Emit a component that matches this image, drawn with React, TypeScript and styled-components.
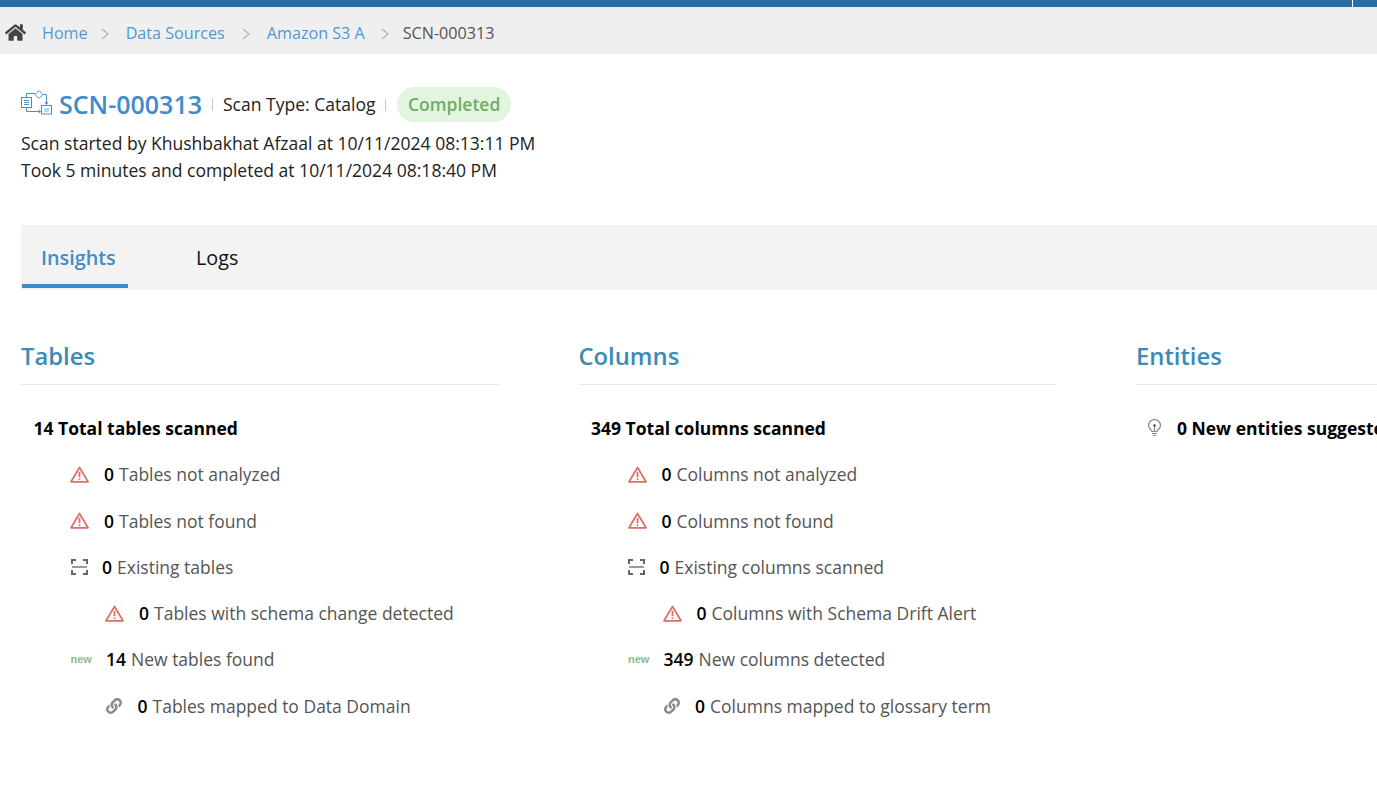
import React from 'react'
import styled, { createGlobalStyle } from 'styled-components'
import { FaHome, FaLink } from 'react-icons/fa'

const GlobalStyle = createGlobalStyle`
    html, body {
        margin: 0;
        padding: 0;
        background: #fff;
        overflow: hidden;
    }
    body {
        font-family: 'Open Sans', 'Liberation Sans', sans-serif;
        color: #333;
    }
`

const Page = styled.div`
    width: 1377px;
    height: 802px;
    overflow: hidden;
`

const TopBar = styled.div`
    height: 7px;
    background: #2d6ca2;
    display: flex;
    justify-content: flex-end;
`

const TopBarEnd = styled.div`
    width: 24px;
    border-left: 1px solid #fff;
`

const Breadcrumb = styled.nav`
    height: 47px;
    box-sizing: border-box;
    padding: 4px 0 0 5px;
    background: #efefef;
    display: flex;
    align-items: center;
    font-size: 16.15px;
    color: #555;
`

const HomeIcon = styled(FaHome)`
    width: 21px;
    height: 21px;
    color: #444;
    margin-right: 16px;
`

const CrumbLink = styled.a`
    color: #4f9ad4;
    text-decoration: none;
`

const CrumbSep = styled.svg<{ $left: number; $right: number }>`
    width: 8px;
    height: 12px;
    margin: 2px ${props => props.$right}px 0 ${props => props.$left}px;
    fill: none;
    stroke: #b5b5b5;
    stroke-width: 1.3;
`

const Header = styled.header`
    padding: 32px 0 0 21px;
    height: 171px;
    box-sizing: border-box;
`

const TitleRow = styled.div`
    display: flex;
    align-items: center;
    height: 36px;
    margin-bottom: 8px;
`

const ScanIcon = styled.svg`
    width: 31px;
    height: 26px;
    margin-right: 7px;
    margin-top: -4px;
    fill: none;
    stroke: #4a90c9;
    stroke-width: 1;
`

const ScanId = styled.h1`
    margin: 0;
    font-size: 25px;
    font-weight: 600;
    color: #428bca;
`

const Divider = styled.span`
    width: 1px;
    height: 12px;
    margin: 2px 10px 0 10px;
    background: #c8c8c8;
`

const ScanType = styled.span`
    font-size: 17.55px;
    color: #222;
`

const StatusPill = styled.span`
    background: #e2f5de;
    color: #74aa68;
    font-size: 17.55px;
    font-weight: 600;
    border-radius: 18px;
    padding: 5px 10.5px;
    margin-left: 1px;
    line-height: 25px;
`

const Meta = styled.p`
    margin: 0;
    font-size: 17.55px;
    line-height: 27px;
    color: #222;
`

const Tabs = styled.div`
    margin-left: 21px;
    height: 65px;
    background: #f3f3f3;
    display: flex;
    align-items: flex-start;
`

const Tab = styled.div<{ $active?: boolean }>`
    width: 106px;
    height: 63px;
    margin-left: ${props => props.$active ? '1px' : '0'};
    padding-left: ${props => props.$active ? '19px' : '68px'};
    padding-top: 6px;
    display: flex;
    align-items: center;
    font-size: 19.8px;
    font-weight: ${props => props.$active ? 600 : 400};
    color: ${props => props.$active ? '#428bca' : '#111'};
    border-bottom: ${props => props.$active ? '4px solid #428bca' : '4px solid transparent'};
    box-sizing: border-box;
`

const Columns = styled.div`
    display: flex;
    gap: 80px;
    padding: 49px 0 0 21px;
`

const Column = styled.section`
    flex: 0 0 477.5px;
`

const ColumnTitle = styled.h2`
    margin: 0;
    height: 45px;
    border-bottom: 1px solid #e9e9e9;
    font-size: 23.8px;
    line-height: 34px;
    font-weight: 600;
    color: #3a8bb5;
`

const Total = styled.div<{ $pad?: number }>`
    display: flex;
    align-items: center;
    margin-top: 30px;
    padding-left: ${props => props.$pad ?? 12.5}px;
    height: 26px;
    font-size: 17.5px;
    font-weight: 700;
    color: #000;
`

const Row = styled.div<{ $indent: number }>`
    display: flex;
    align-items: center;
    height: 46.25px;
    padding-left: ${props => props.$indent}px;
    font-size: 17.5px;
    color: #555;
    white-space: nowrap;
`

const RowList = styled.div`
    margin-top: 10.3px;
`

const IconSlot = styled.span<{ $w: number }>`
    width: ${props => props.$w}px;
    display: flex;
    align-items: center;
    flex: none;
`

const Count = styled.b`
    color: #000;
    font-weight: 600;
    margin-right: 5px;
`

const NewTag = styled.span`
    font-family: 'Liberation Sans', Arial, sans-serif;
    font-size: 11px;
    font-weight: 700;
    color: #8dbb84;
`

const LinkIcon = styled(FaLink)`
    width: 16px;
    height: 16px;
    color: #8c8c8c;
`

const BulbSvg = styled.svg`
    width: 15px;
    height: 18px;
    fill: none;
    stroke: #888;
    stroke-width: 1.2;
`

const WarnSvg = styled.svg`
    width: 19px;
    height: 17px;
    fill: none;
    stroke: #dc6f62;
`

const BracketSvg = styled.svg`
    width: 17px;
    height: 16px;
    fill: none;
    stroke: #666;
    stroke-width: 2;
`

const Warn = () => (
    <WarnSvg viewBox="0 0 19 17">
        <path d="M9.5 1.5 L18 15.8 H1 Z" strokeWidth="1.7" strokeLinejoin="round" />
        <path d="M9.5 5.8 V11.2 M9.5 12.4 V14" strokeWidth="1.8" />
    </WarnSvg>
)

const Bracket = () => (
    <BracketSvg viewBox="0 0 17 16">
        <path d="M1 5 V1 H5 M12 1 H16 V5 M1 11 V15 H5 M12 15 H16 V11" />
        <path d="M1 8 H16" strokeWidth="1.3" />
    </BracketSvg>
)

const Bulb = () => (
    <BulbSvg viewBox="0 0 15 18">
        <path d="M5 12.5 C4.8 10.5 1.5 9.6 1.5 6.5 A6 6 0 0 1 13.5 6.5 C13.5 9.6 10.2 10.5 10 12.5 Z" />
        <path d="M5 14.5 H10 M6 16.5 H9 M7.5 12 V7" />
        <circle cx="7.5" cy="6.5" r="1.2" fill="#444" stroke="none" />
    </BulbSvg>
)

const Sep = ({ left, right }: { left: number; right: number }) => (
    <CrumbSep $left={left} $right={right} viewBox="0 0 8 12"><path d="M1 1 L7 6 L1 11" /></CrumbSep>
)

type RowSpec = {
    kind: 'warn' | 'bracket' | 'new' | 'link'
    indent: number
    slot: number
    count: number
    label: string
}

const rowsFor = (tables: boolean): RowSpec[] => tables ? [
    { kind: 'warn', indent: 49, slot: 34, count: 0, label: 'Tables not analyzed' },
    { kind: 'warn', indent: 49, slot: 34, count: 0, label: 'Tables not found' },
    { kind: 'bracket', indent: 50, slot: 31, count: 0, label: 'Existing tables' },
    { kind: 'warn', indent: 84, slot: 34, count: 0, label: 'Tables with schema change detected' },
    { kind: 'new', indent: 49.5, slot: 35.5, count: 14, label: 'New tables found' },
    { kind: 'link', indent: 85, slot: 31.5, count: 0, label: 'Tables mapped to Data Domain' },
] : [
    { kind: 'warn', indent: 49, slot: 34, count: 0, label: 'Columns not analyzed' },
    { kind: 'warn', indent: 49, slot: 34, count: 0, label: 'Columns not found' },
    { kind: 'bracket', indent: 49, slot: 32, count: 0, label: 'Existing columns scanned' },
    { kind: 'warn', indent: 84, slot: 34, count: 0, label: 'Columns with Schema Drift Alert' },
    { kind: 'new', indent: 49.5, slot: 35.5, count: 349, label: 'New columns detected' },
    { kind: 'link', indent: 85, slot: 31.5, count: 0, label: 'Columns mapped to glossary term' },
]

const RowIcon = ({ kind }: { kind: RowSpec['kind'] }) => {
    if (kind === 'warn') return <Warn />
    if (kind === 'bracket') return <Bracket />
    if (kind === 'new') return <NewTag>new</NewTag>
    return <LinkIcon />
}

const StatList = ({ rows }: { rows: RowSpec[] }) => (
    <RowList>
        {rows.map(r => (
            <Row key={r.label} $indent={r.indent}>
                <IconSlot $w={r.slot}><RowIcon kind={r.kind} /></IconSlot>
                <Count>{r.count}</Count>
                {r.label}
            </Row>
        ))}
    </RowList>
)

export default function App() {
    return (
        <Page>
            <GlobalStyle />
            <TopBar><TopBarEnd /></TopBar>
            <Breadcrumb>
                <HomeIcon />
                <CrumbLink>Home</CrumbLink>
                <Sep left={13} right={17} />
                <CrumbLink>Data Sources</CrumbLink>
                <Sep left={17} right={17} />
                <CrumbLink>Amazon S3 A</CrumbLink>
                <Sep left={16} right={14} />
                <span>SCN-000313</span>
            </Breadcrumb>
            <Header>
                <TitleRow>
                    <ScanIcon viewBox="0 0 31 26">
                        <rect x="0.5" y="8.5" width="10" height="10" />
                        <path d="M3 11.5 H8 M3 13.5 H8 M3 15.5 H8" />
                        <path d="M14 5.5 L18 1.5 L22 5.5 L18 9.5 Z" />
                        <rect x="20.5" y="16.5" width="10" height="8.5" />
                        <rect x="23" y="19" width="5" height="4" fill="#bcd8ee" stroke="none" />
                        <path d="M5.5 8 V4.5 H14 M22 5.5 H25.5 V15 M5.5 19 V22.5 H19" />
                        <path d="M24 13 L25.5 15.5 L27 13 M17.5 21 L19.8 22.5 L17.5 24" />
                    </ScanIcon>
                    <ScanId>SCN-000313</ScanId>
                    <Divider />
                    <ScanType>Scan Type: Catalog</ScanType>
                    <Divider />
                    <StatusPill>Completed</StatusPill>
                </TitleRow>
                <Meta>Scan started by Khushbakhat Afzaal at 10/11/2024 08:13:11 PM</Meta>
                <Meta>Took 5 minutes and completed at 10/11/2024 08:18:40 PM</Meta>
            </Header>
            <Tabs>
                <Tab $active>Insights</Tab>
                <Tab>Logs</Tab>
            </Tabs>
            <Columns>
                <Column>
                    <ColumnTitle>Tables</ColumnTitle>
                    <Total>14 Total tables scanned</Total>
                    <StatList rows={rowsFor(true)} />
                </Column>
                <Column>
                    <ColumnTitle>Columns</ColumnTitle>
                    <Total>349 Total columns scanned</Total>
                    <StatList rows={rowsFor(false)} />
                </Column>
                <Column>
                    <ColumnTitle>Entities</ColumnTitle>
                    <Total $pad={11}>
                        <IconSlot $w={30}><Bulb /></IconSlot>
                        0 New entities suggested
                    </Total>
                </Column>
            </Columns>
        </Page>
    )
}
